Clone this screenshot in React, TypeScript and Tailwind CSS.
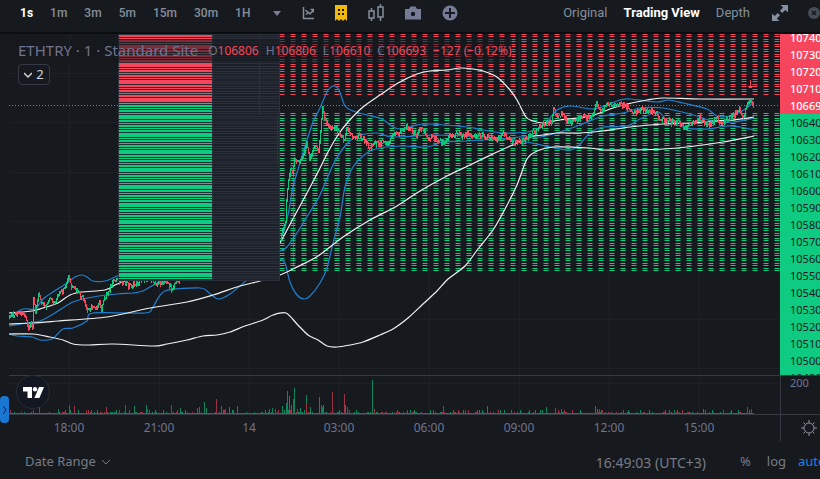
type Pt = [number, number];

const INTERVALS = ["1s", "1m", "3m", "5m", "15m", "30m", "1H"];
const ASKS = ["10740", "10730", "10720", "10710", "10669"];
const BIDS = [
  "10640", "10630", "10620", "10610", "10600", "10590", "10580", "10570",
  "10560", "10550", "10540", "10530", "10520", "10510", "10500", "10490",
];
const TIMES = ["18:00", "21:00", "14", "03:00", "06:00", "09:00", "12:00", "15:00"];

const WHITE: Pt[][] = [
  [[9, 313], [32, 311], [43, 308], [58, 303], [70, 295], [82, 292], [105, 290], [115, 285], [125, 281], [140, 276]],
  [[280, 243], [286, 232], [295, 215], [307, 193], [318, 172], [328, 152], [338, 135], [348, 122], [363, 107], [380, 95], [398, 83], [417, 74], [430, 71], [447, 70], [460, 68], [473, 69], [483, 71], [497, 77], [510, 90], [517, 100], [526, 117], [533, 121], [543, 123], [560, 120], [587, 117], [597, 114], [610, 109], [627, 104], [647, 100], [663, 98], [700, 99], [754, 99]],
  [[9, 324], [32, 323], [58, 321], [107, 317], [150, 308], [187, 302], [213, 295], [240, 286], [260, 281], [280, 275], [295, 268], [318, 256], [343, 237], [370, 220], [397, 206], [420, 191], [447, 176], [470, 165], [497, 152], [517, 143], [530, 137], [543, 135], [557, 133], [580, 133], [603, 131], [630, 127], [663, 124], [690, 123], [713, 121], [733, 120], [754, 117]],
  [[9, 334], [33, 334], [50, 337], [63, 340], [73, 344], [87, 345], [113, 344], [153, 346], [167, 344], [187, 340], [203, 336], [217, 335], [230, 332], [245, 326], [263, 320], [273, 315], [286, 313], [297, 324], [308, 335], [318, 340], [327, 346], [337, 347], [350, 345], [363, 342], [380, 335], [393, 329], [408, 318], [423, 304], [437, 291], [448, 279], [465, 266], [478, 249], [493, 230], [505, 209], [517, 185], [527, 159], [537, 151], [553, 147], [590, 148], [603, 150], [623, 150], [663, 149], [687, 147], [723, 142], [754, 136]],
];

const BLUE: Pt[][] = [
  [[9, 317], [23, 309], [35, 309], [43, 299], [53, 292], [67, 283], [75, 277], [82, 275], [87, 277], [93, 281], [105, 281], [113, 278], [119, 275]],
  [[283, 235], [288, 215], [293, 187], [300, 163], [307, 140], [313, 122], [320, 108], [327, 92], [333, 86], [339, 90], [345, 106], [353, 111], [367, 115], [382, 119], [393, 127], [402, 129], [413, 126], [427, 124], [467, 127], [483, 130], [503, 133], [527, 132], [540, 128], [550, 118], [557, 110], [570, 106], [593, 109], [607, 105], [620, 100], [630, 99], [657, 102], [668, 100], [683, 103], [707, 109], [717, 116], [730, 116], [742, 111], [754, 102]],
  [[9, 326], [27, 323], [40, 321], [55, 313], [73, 302], [93, 297], [117, 294], [133, 293], [143, 291], [157, 283], [163, 281], [185, 276]],
  [[280, 251], [287, 247], [297, 233], [308, 215], [320, 195], [333, 165], [345, 146], [357, 136], [377, 133], [393, 137], [437, 135], [483, 137], [503, 139], [520, 137], [540, 137], [560, 132], [580, 125], [603, 116], [623, 113], [640, 108], [663, 108], [690, 114], [713, 121], [733, 122], [754, 118]],
  [[9, 334], [17, 336], [32, 337], [40, 340], [52, 339], [63, 329], [73, 328], [87, 321], [93, 313], [145, 313], [153, 307], [165, 291], [200, 288], [208, 292], [218, 299], [230, 294], [248, 279]],
  [[280, 259], [285, 263], [290, 282], [297, 295], [304, 299], [310, 296], [320, 283], [327, 268], [333, 243], [340, 217], [345, 187], [353, 167], [367, 153], [380, 148], [403, 146], [427, 147], [443, 142], [467, 141], [503, 139], [527, 142], [550, 147], [567, 150], [577, 147], [590, 133], [603, 127], [627, 126], [640, 119], [658, 112], [667, 120], [687, 128], [707, 129], [727, 126], [740, 127], [754, 130]],
];

const PRICE: Pt[][] = [
  [[9, 317], [12, 314], [18, 313], [23, 311], [27, 320], [29, 328], [31, 322], [33, 328], [34, 298], [36, 312], [39, 293], [42, 303], [47, 305], [50, 299], [55, 302], [60, 293], [65, 290], [69, 275], [72, 287], [78, 291], [83, 298], [88, 310], [93, 306], [97, 308], [100, 301], [102, 310], [105, 297], [110, 288], [115, 281], [119, 278], [124, 281], [130, 285], [135, 284], [141, 280], [148, 276], [155, 282], [162, 283], [167, 281], [172, 288], [177, 281], [182, 276]],
  [[281, 240], [283, 230], [286, 222], [287, 200], [289, 180], [291, 168], [293, 172], [295, 158], [298, 162], [301, 160], [304, 154], [307, 142], [310, 158], [313, 150], [316, 146], [319, 150], [321, 130], [323, 107], [325, 118], [327, 122], [332, 127], [337, 127], [345, 140], [347, 128], [355, 138], [360, 134], [370, 147], [377, 141], [385, 144], [397, 133], [408, 126], [417, 135], [420, 127], [427, 135], [443, 142], [452, 134], [470, 134], [483, 135], [497, 138], [503, 133], [517, 143], [530, 136], [537, 129], [547, 123], [552, 120], [554, 108], [557, 116], [562, 113], [570, 123], [580, 117], [593, 116], [597, 101], [599, 108], [602, 110], [608, 104], [618, 104], [628, 107], [637, 112], [643, 109], [657, 112], [660, 119], [673, 121], [680, 122], [685, 128], [695, 121], [700, 117], [707, 123], [712, 123], [717, 118], [723, 123], [730, 117], [740, 110], [744, 117], [748, 103], [751, 100], [754, 105]],
];

const UP = "#0ecb81";
const DOWN = "#f6465d";

// [x, height, colour] of the taller volume bars
const VOLUME: [number, number, string][] = [
  [33, 4, DOWN], [39, 7, DOWN], [69, 9, DOWN], [74, 8, DOWN], [58, 5, UP], [106, 7, DOWN], [125, 9, DOWN], [134, 8, UP], [146, 9, UP], [147, 5, DOWN],
  [171, 9, DOWN], [180, 6, UP], [197, 6, UP], [199, 7, UP], [204, 12, UP], [206, 6, UP], [216, 15, DOWN], [221, 8, UP], [225, 5, DOWN], [229, 7, UP],
  [237, 8, UP], [269, 5, UP], [272, 6, UP], [275, 5, DOWN], [282, 8, UP], [286, 11, UP], [287, 23, UP], [289, 18, UP], [291, 9, UP], [293, 15, DOWN], [294, 26, UP],
  [297, 5, DOWN], [300, 6, UP], [306, 19, UP], [306, 11, DOWN], [310, 7, UP], [319, 17, UP], [321, 9, DOWN], [322, 7, UP], [323, 9, UP], [332, 22, DOWN],
  [344, 20, DOWN], [345, 9, UP], [347, 7, DOWN], [372, 34, UP], [374, 5, DOWN], [407, 4, UP], [443, 8, DOWN], [487, 8, UP], [511, 4, DOWN],
  [542, 4, UP], [546, 7, UP], [555, 6, DOWN], [561, 5, DOWN], [595, 8, UP], [597, 5, UP], [599, 5, DOWN], [628, 4, UP], [703, 5, UP], [738, 4, UP],
  [747, 7, DOWN], [749, 4, UP], [751, 5, DOWN],
];

const noise = (n: number) => {
  const v = Math.sin(n * 12.9898) * 43758.5453;
  return v - Math.floor(v);
};

const smooth = (pts: Pt[]) => {
  let d = `M${pts[0][0]} ${pts[0][1]}`;
  for (let i = 0; i < pts.length - 1; i++) {
    const a = pts[Math.max(0, i - 1)];
    const b = pts[i];
    const c = pts[i + 1];
    const e = pts[Math.min(pts.length - 1, i + 2)];
    d += `C${b[0] + (c[0] - a[0]) / 7} ${b[1] + (c[1] - a[1]) / 7} ${c[0] - (e[0] - b[0]) / 7} ${c[1] - (e[1] - b[1]) / 7} ${c[0]} ${c[1]}`;
  }
  return d;
};

const candles = PRICE.flatMap((line) => {
  const out: { x: number; y: number; h: number; up: boolean }[] = [];
  let prev = line[0][1];
  for (let i = 0; i < line.length - 1; i++) {
    const [x0, y0] = line[i];
    const [x1, y1] = line[i + 1];
    for (let x = x0; x < x1; x++) {
      const wide = x1 - x0 > 4 ? 5 : 1;
      const y = y0 + ((y1 - y0) * (x + 1 - x0)) / (x1 - x0) + (noise(x) - 0.5) * wide;
      const top = Math.round(Math.min(prev, y) - noise(x + 5) * 1.5);
      out.push({ x, y: top, h: Math.max(2, Math.round(Math.abs(y - prev) + 1 + noise(x + 9) * 3)), up: y <= prev });
      prev = y;
    }
  }
  return out;
});

const smallVolume = Array.from({ length: 745 }, (_, i) => ({
  x: 9 + i,
  h: noise(i + 40) > 0.9 ? 4 : noise(i + 40) > 0.72 ? 2 : 1,
  up: noise(i + 300) > 0.5,
}));

const RIBBON_ROWS = Array.from({ length: 98 }, (_, i) => Math.floor(36 + i * 2.5));

function Chart() {
  return (
    <svg
      viewBox="9 34 771 380"
      preserveAspectRatio="none"
      className="block h-[380px] w-full"
      role="img"
      aria-label="ETHTRY price chart"
      shapeRendering="crispEdges"
    >
      <defs>
        <pattern id="asks" x="290" y="34" width="11" height="5" patternUnits="userSpaceOnUse">
          <path d="M0 .5h6M0 2.5h6" stroke={DOWN} strokeOpacity=".5" />
          <path d="M1 .5h4M1 2.5h4" stroke={DOWN} />
        </pattern>
        <pattern id="bids" x="290" y="113" width="11" height="5" patternUnits="userSpaceOnUse">
          <path d="M0 .5h6M0 2.5h6" stroke={UP} strokeOpacity=".5" />
          <path d="M1 .5h4M1 2.5h4" stroke={UP} />
        </pattern>
      </defs>

      <g stroke="#1d2126">
        {[69, 159, 249, 339, 429, 519, 609, 699].map((x) => (
          <path key={x} d={`M${x + 0.5} 34V414`} />
        ))}
        {[73, 122, 172, 221, 270, 319, 368, 383].map((y) => (
          <path key={y} d={`M9 ${y + 0.5}H780`} />
        ))}
      </g>

      <rect x="280" y="34" width="500" height="62" fill="url(#asks)" />
      <rect x="280" y="113" width="500" height="158" fill="url(#bids)" />

      <g fill="none" shapeRendering="auto">
        {BLUE.map((p, i) => (
          <path key={i} d={smooth(p)} stroke="#2080d0" strokeWidth="1.2" />
        ))}
        {WHITE.map((p, i) => (
          <path key={i} d={smooth(p)} stroke="#f0f0f0" strokeWidth="1.2" />
        ))}
      </g>

      <g>
        {candles.map((c, i) => (
          <rect key={i} x={c.x} y={c.y} width="1" height={c.h} fill={c.up ? UP : DOWN} />
        ))}
      </g>
      <path d="M293.5 172V270" stroke={DOWN} strokeOpacity=".6" />

      <path d="M9 105.5H780" stroke={DOWN} strokeDasharray="1 2" />
      <path d="M750.5 80V88M748 86.5h5M749 87.5h3" stroke={DOWN} />

      <rect x="118" y="34" width="162" height="247" fill="#2b303a" />
      <rect x="213" y="35" width="66" height="245" fill="#1c2028" />
      <rect x="119" y="35" width="93" height="68" fill={DOWN} />
      <rect x="119" y="103" width="93" height="177" fill={UP} />
      {RIBBON_ROWS.map((y, i) => (
        <g key={y}>
          {i % 7 !== 4 && <rect x="119" y={y + 1} width="93" height="1" fill="#1e242b" fillOpacity=".9" />}
          <rect x="213" y={y} width="66" height="1" fill="#2b303a" />
        </g>
      ))}
      <path d="M259.5 34V115M277.5 115V165" stroke="#2b303a" />

      <g opacity=".6">
        {smallVolume.map((v) => (
          <rect key={v.x} x={v.x} y={414 - v.h} width="1" height={v.h} fill={v.up ? UP : DOWN} />
        ))}
        {VOLUME.map(([x, h, c], i) => (
          <rect key={i} x={x} y={414 - h} width="1" height={h} fill={c} />
        ))}
      </g>
      <path d="M9 375.5H780" stroke="#363a42" />
    </svg>
  );
}

function Toolbar() {
  return (
    <header className="flex h-[34px] items-center justify-between overflow-hidden border-b-2 border-[#0b0e11] pb-1.5 pl-5 font-[Roboto,sans-serif] text-[12px] font-medium text-[#848e9c]">
      <nav className="flex items-center gap-[17px]" aria-label="Interval">
        {INTERVALS.map((t) => (
          <button key={t} className={t === "1s" ? "font-bold text-white" : ""}>
            {t}
          </button>
        ))}
        <div className="flex items-center gap-[21px] pl-1.5 text-[#848e9c]">
          <button aria-label="More intervals">
            <svg className="block h-2 w-2" viewBox="0 0 8 8">
              <path d="M0 2h8L4 7z" fill="#7b7f97" />
            </svg>
          </button>
          <button aria-label="Indicators">
            <svg className="block h-4 w-3" viewBox="0 0 12 16" fill="none" stroke="currentColor" strokeWidth="1.5">
              <path d="M1.5 2v11.5H12M4 9.5L6.5 7.5l1.5 1.5 3.5-4M3.5 5l2.5 2.5M8.5 4.5h3v3" />
            </svg>
          </button>
          <button aria-label="Order book">
            <svg className="block h-4 w-3" viewBox="0 0 12 16">
              <path d="M0 0h12v16l-2-2-2 2-2-2-2 2-2-2-2 2z" fill="#f0b90b" />
              <path d="M3 4h2v2H3zM7 4h2v2H7zM3 8h2v2H3zM7 8h2v2H7z" fill="#161a1e" />
            </svg>
          </button>
          <button aria-label="Chart style">
            <svg className="block h-[18px] w-4" viewBox="0 0 16 18" fill="none" stroke="currentColor" strokeWidth="1.5">
              <path d="M3.5 4v3M3.5 14v3M1 7h5v7H1zM12.5 0v3M12.5 13v4M10 3h5v10h-5z" />
            </svg>
          </button>
          <button aria-label="Snapshot">
            <svg className="block h-4 w-4" viewBox="0 0 16 16">
              <path d="M0 4h4l1.5-2.5h5L12 4h4v10.500H0z" fill="#767c95" />
              <circle cx="8" cy="9" r="2.2" fill="#161a1e" />
            </svg>
          </button>
          <button aria-label="Add">
            <svg className="block h-4 w-4" viewBox="0 0 16 16">
              <circle cx="8" cy="8" r="7.5" fill="#767c95" />
              <path d="M8 3v10M3 8h10" stroke="#161a1e" strokeWidth="2" />
            </svg>
          </button>
        </div>
      </nav>
      <nav className="flex items-center gap-4 text-[13px] font-normal" aria-label="View">
        <button>Original</button>
        <button className="font-bold text-white">Trading View</button>
        <button>Depth</button>
        <div className="flex items-center gap-5 pl-1.5">
          <button aria-label="Full screen">
            <svg className="block h-4 w-4" viewBox="0 0 16 16" fill="#848e9c">
              <path d="M8.5 0H16v7.5l-2.6-2.6-3.2 3.2-2.3-2.3 3.2-3.2zM7.5 16H0V8.5l2.6 2.6 3.2-3.2 2.3 2.3-3.2 3.2z" />
            </svg>
          </button>
          <button aria-label="Close">
            <svg className="block h-3 w-3" viewBox="0 0 12 12">
              <circle cx="6" cy="6" r="6" fill="#474d57" />
              <path d="M4 4l4 4M8 4l-4 4" stroke="#161a1e" strokeWidth="1.5" />
            </svg>
          </button>
        </div>
      </nav>
    </header>
  );
}

function Quote({ name, value }: { name: string; value: string }) {
  return (
    <span>
      {name}
      <span className="text-[#f6465d]">{value}</span>
    </span>
  );
}

export default function App() {
  return (
    <div className="min-h-screen overflow-hidden bg-[#161a1e] font-['Noto_Sans',sans-serif] text-[#6f7390]">
      <Toolbar />
      <main className="flex">
        <section className="relative min-w-0 flex-1 pl-[9px]">
          <Chart />
          <div className="absolute top-[5px] left-[14px] flex h-[23px] items-center gap-2.5 bg-[#161a1e]/55 pl-1 whitespace-nowrap">
            <h1 className="text-[15px]">ETHTRY · 1 · Standard Site</h1>
            <p className="flex gap-[7px] text-[12px]">
              <Quote name="O" value="106806" />
              <Quote name="H" value="106806" />
              <Quote name="L" value="106610" />
              <Quote name="C" value="106693" />
              <span className="text-[#f6465d]">−127 (−0.12%)</span>
            </p>
          </div>
          <button className="absolute top-[30px] left-[18px] flex h-[21px] w-8 items-center justify-center gap-1 rounded border border-[#363a45] bg-[#161a1e] text-[13px] text-[#d1d4dc]">
            <svg className="h-2 w-2" viewBox="0 0 8 8" fill="none" stroke="currentColor" strokeWidth="1.5">
              <path d="M0 2l4 4 4-4" />
            </svg>
            2
          </button>
          <a href="#tradingview" aria-label="TradingView" className="absolute top-[341px] left-[16px] flex h-[34px] w-[34px] items-center justify-center rounded-full border border-[#2a2e39] bg-[#131722]">
            <svg className="h-[11px] w-[21px]" viewBox="0 0 21 11" fill="#fff">
              <path d="M0 0h9v11H4.500V4.500H0z" />
              <circle cx="12" cy="2.2" r="2.2" />
              <path d="M16 0h5l-4.600 11h-5z" />
            </svg>
          </a>
          <button aria-label="Show drawing tools" className="absolute top-[362px] left-0 flex h-[27px] w-[9px] items-center justify-center rounded bg-[#1976d2]">
            <svg className="h-2 w-1" viewBox="0 0 4 8" fill="none" stroke="#10243c">
              <path d="M0 0l3 4-3 4" />
            </svg>
          </button>
          <div className="flex h-[27px] items-center border-t border-[#363a42] pr-9 pl-[15px] text-center text-[12px]">
            {TIMES.map((t) => (
              <span key={t} className="flex-1">
                {t}
              </span>
            ))}
          </div>
        </section>
        <aside className="w-10 shrink-0 overflow-hidden text-[11px] leading-[17px]">
          <div className="h-[341px] overflow-hidden bg-[#0ecb81] text-[#161a1e]">
            <ul className="-mt-[5px] bg-[#f6465d] pl-[10px] font-medium text-white">
              {ASKS.map((p) => (
                <li key={p}>{p}</li>
              ))}
            </ul>
            <ul className="pl-[10px]">
              {BIDS.map((p) => (
                <li key={p}>{p}</li>
              ))}
            </ul>
          </div>
          <div className="h-[39px] border-t border-l border-[#363a42] pl-[9px] leading-[14px]">200</div>
          <div className="flex h-[27px] items-center border-t border-l border-[#363a42] pl-5">
            <button aria-label="Chart settings">
              <svg className="block h-4 w-4" viewBox="0 0 16 16" fill="none" stroke="#8d92a3">
                <circle cx="8" cy="8" r="5" />
                <path d="M8 0v3M8 13v3M0 8h3M13 8h3M2.5 2.5l2 2M11.5 11.5l2 2M2.5 13.5l2-2M11.5 4.5l2-2" />
              </svg>
            </button>
          </div>
        </aside>
      </main>
      <footer className="flex h-[38px] items-center justify-between overflow-hidden pl-[25px] text-[13px] text-[#787b86]">
        <button className="flex items-center gap-1.5 pt-1">
          Date Range
          <svg className="h-2 w-2" viewBox="0 0 8 8" fill="none" stroke="currentColor">
            <path d="M0 2l4 4 4-4" />
          </svg>
        </button>
        <div className="flex items-center pt-1 whitespace-nowrap">
          <button className="pr-[34px] text-[14px]">16:49:03 (UTC+3)</button>
          <button className="pr-4">%</button>
          <button className="pr-3">log</button>
          <button className="w-[22px] overflow-hidden text-left text-[#1e80e8]">auto</button>
        </div>
      </footer>
    </div>
  );
}
